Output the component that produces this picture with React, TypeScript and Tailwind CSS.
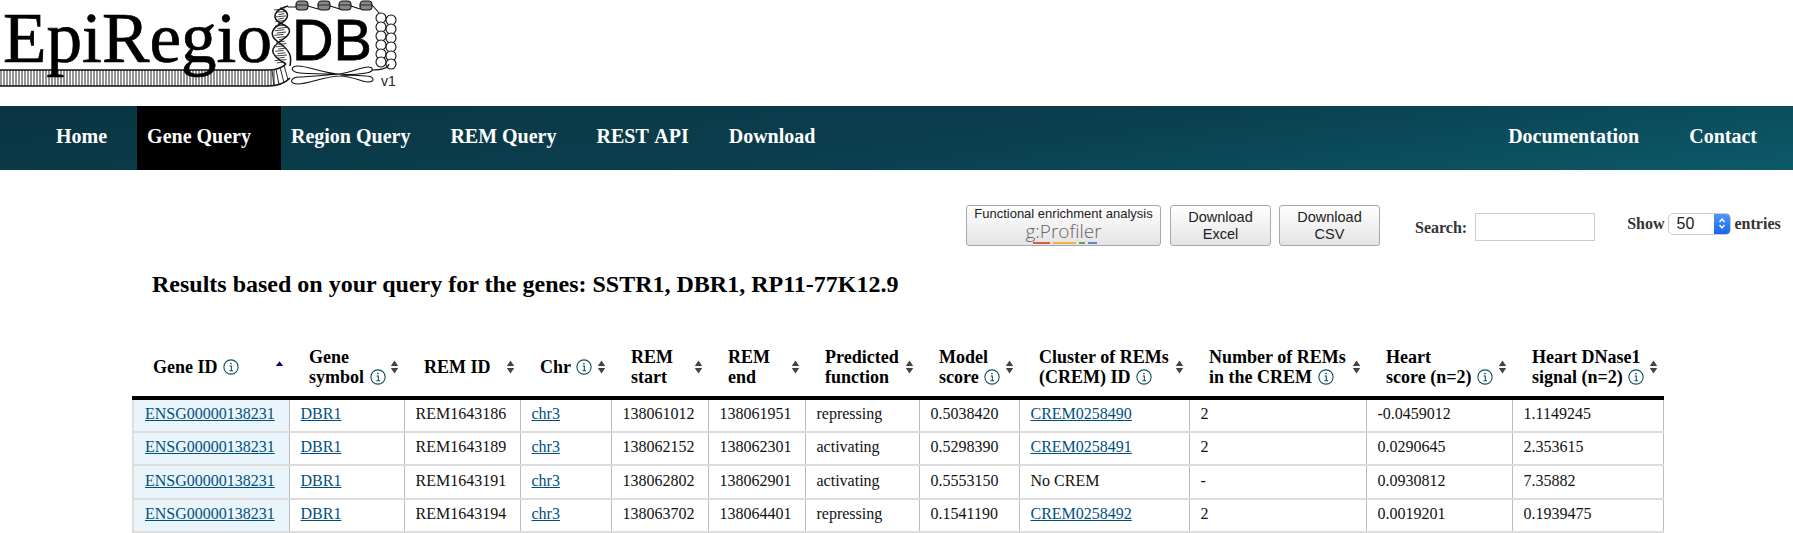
// EpiRegioDB gene query results page.

const serif = "font-['Liberation_Serif',serif]";
const sans = "font-['Liberation_Sans',Arial,sans-serif]";

function Logo() {
  const ticks = Array.from({ length: 92 }, (_, i) => i * 3 + 1);
  const rungs = Array.from({ length: 24 }, (_, i) => 10 + i * 2.3);
  const beads = [18, 27, 36, 45, 54, 62];
  return (
    <svg width="400" height="106" viewBox="0 0 400 106" role="img" className="block">
      <g stroke="#111" fill="none">
        {/* ribbon */}
        <path d="M0 70 H268 Q280 70 286 64 M0 86 H268 Q282 86 290 78" strokeWidth="1.7" />
        {ticks.map((x) => (
          <line key={x} x1={x} x2={x} y1={70} y2={86} strokeWidth="0.9" />
        ))}
        <path d="M272 70 L274 86 M276 69 L279 85 M280 67 L284 83 M284 65 L288 80" strokeWidth="0.9" />
        {/* helix */}
        <path d="M286 64 C268 54 270 48 282 40 C292 33 292 28 282 24 C270 18 274 10 288 6" strokeWidth="1.5" />
        <path d="M290 66 C292 56 290 50 278 42 C270 36 270 30 280 24 C290 18 290 12 280 8" strokeWidth="1.5" />
        {rungs.map((y) => (
          <line key={y} x1={274 + (y % 5)} x2={287 - (y % 4)} y1={y} y2={y - 1} strokeWidth="0.8" />
        ))}
        {/* linker and nucleosomes */}
        <path d="M288 7 L296 7 M308 6 L318 9 M330 6 L340 9 M351 6 L360 9 M372 5 L381 15" strokeWidth="1.1" />
        {[302, 324, 345, 366].map((x) => (
          <g key={x}>
            <rect x={x - 6} y={1} width={12} height={9} rx={3.5} fill="#888" strokeWidth="1.1" />
            <line x1={x - 6} x2={x + 6} y1={5} y2={5} strokeWidth="0.8" />
          </g>
        ))}
        {/* chromatin beads */}
        {beads.map((y) => (
          <g key={y}>
            <circle cx={381} cy={y} r={5} fill="#fff" strokeWidth="1.1" />
            <circle cx={391} cy={y + 2} r={5} fill="#fff" strokeWidth="1.1" />
          </g>
        ))}
        {/* chromosome */}
        <path
          d="M340 74 C352 72 362 67 368 67 C374 67 374 72 366 73 C354 75 346 75 340 74 C326 74 308 66 298 66 C290 66 290 72 300 73 C312 74 326 74 340 74 C326 75 308 77 298 77 C290 78 289 84 298 84 C308 84 326 76 340 76 C352 76 362 82 368 82 C376 82 374 76 366 76 C354 75 346 75 340 76"
          strokeWidth="1.1"
        />
        <path d="M372 70 C382 70 388 68 389 64" strokeWidth="1.1" />
      </g>
      <text x="3" y="62" fontSize="71" fill="#000" stroke="#000" strokeWidth="0.7" fontFamily="'Liberation Serif', serif" textLength="269" lengthAdjust="spacingAndGlyphs">
        EpiRegio
      </text>
      <text x="292" y="60" fontSize="58" fill="#000" stroke="#000" strokeWidth="0.8" fontFamily="'Liberation Sans', Arial, sans-serif" textLength="80" lengthAdjust="spacingAndGlyphs">
        DB
      </text>
      <text x="381" y="86" fontSize="14" fill="#222" fontFamily="'Liberation Sans', Arial, sans-serif">
        v1
      </text>
    </svg>
  );
}

function NavItem({ label, active, className = "" }: { label: string; active?: boolean; className?: string }) {
  return (
    <a className={`flex items-center pb-[5px] pl-[10px] pr-[30px] ${active ? "bg-black" : ""} ${className}`}>{label}</a>
  );
}

function NavBar() {
  return (
    <nav
      className={`flex h-[64px] justify-between bg-[linear-gradient(172deg,#0a3543_0%,#0a3f4e_55%,#0c5a69_100%)] pl-[46px] pr-[36px] text-[20px] font-bold text-white ${serif}`}
    >
      <div className="flex">
        <NavItem label="Home" />
        <NavItem label="Gene Query" active />
        <NavItem label="Region Query" />
        <NavItem label="REM Query" />
        <NavItem label="REST API" className="[word-spacing:2px]" />
        <NavItem label="Download" />
      </div>
      <div className="flex gap-[50px]">
        <a className="flex items-center pb-[5px]">Documentation</a>
        <a className="flex items-center pb-[5px]">Contact</a>
      </div>
    </nav>
  );
}

function Btn({ children, className }: { children: React.ReactNode; className: string }) {
  return (
    <button
      className={`flex flex-col items-center justify-center rounded-[3px] border border-[#a8a8a8] bg-[linear-gradient(#fff,#e4e4e4)] text-center font-normal text-[#222] ${sans} ${className}`}
    >
      {children}
    </button>
  );
}

function Toolbar() {
  return (
    <div className={`flex h-[41px] items-center pl-[966px] text-[16px] font-bold text-[#333] ${serif}`}>
      <Btn className="h-[41px] w-[195px] pb-[3px] text-[13px] leading-[15px]">
        <span>Functional enrichment analysis</span>
        <span className="relative font-['Open_Sans',sans-serif] text-[19px] font-light leading-[21px] text-[#666]">
          g:Profiler
          <span className="absolute bottom-[-2px] left-[8px] flex w-[64px] gap-[3px]">
            <i className="h-[2px] w-[26%] bg-[#dc5a40]" />
            <i className="h-[2px] w-[37%] bg-[#f0b33e]" />
            <i className="h-[2px] w-[10%] bg-[#55a95a]" />
            <i className="h-[2px] w-[15%] bg-[#5a87d8]" />
          </span>
        </span>
      </Btn>
      <Btn className="ml-[9px] h-[41px] w-[101px] text-[14.5px] leading-[17px]">
        <span>Download</span>
        <span>Excel</span>
      </Btn>
      <Btn className="ml-[8px] h-[41px] w-[101px] text-[14.5px] leading-[17px]">
        <span>Download</span>
        <span>CSV</span>
      </Btn>
      <span className="ml-[35px] mt-[5px]">Search:</span>
      <input className="ml-[8px] mt-[3px] h-[28px] w-[120px] border border-[#ccc] bg-white" aria-label="Search" />
      <span className="ml-[32px] mt-[-4px]">Show</span>
      <div className={`ml-[3px] mt-[-4px] flex h-[22px] w-[63px] items-stretch rounded-[5px] border border-[#ccc] bg-white font-normal text-[#222] ${sans}`}>
        <span className="flex-1 pl-[8px] text-[16px] leading-[20px]">50</span>
        <span className="flex w-[16px] items-center justify-center rounded-r-[4px] bg-[linear-gradient(#4e97f8,#1667ee)]">
          <svg width="10" height="17" viewBox="0 0 10 17" fill="none" stroke="#fff" strokeWidth="1.4">
            <path d="M2.5 7 L5 4 L7.5 7 M2.5 10 L5 13 L7.5 10" />
          </svg>
        </span>
      </div>
      <span className="ml-[4px] mt-[-4px]">entries</span>
    </div>
  );
}

function InfoIcon() {
  return (
    <svg width="16" height="16" viewBox="0 0 15 15" fill="none" stroke="#0d4b5c" className="ml-[1px] inline-block align-[-2px]">
      <circle cx="7.5" cy="7.5" r="6.7" strokeWidth="1" />
      <path d="M6.2 6.5 H7.8 V11 M6 11 H9.4" strokeWidth="1" />
      <circle cx="7.4" cy="4.2" r="0.8" fill="#0d4b5c" stroke="none" />
    </svg>
  );
}

function SortIcon({ asc }: { asc?: boolean }) {
  return (
    <svg width="11" height="16" viewBox="0 0 9 15" className="absolute right-[4px] top-1/2 mt-[-11px]">
      {asc ? (
        <path d="M1 6.5 L4.5 2 L8 6.5 Z" fill="#0a0a7a" />
      ) : (
        <path d="M1 6.5 L4.5 1.5 L8 6.5 Z M1 8.5 L4.5 13.5 L8 8.5 Z" fill="#444" />
      )}
    </svg>
  );
}

const columns: { w: number; lines: string[]; info?: boolean; asc?: boolean }[] = [
  { w: 156, lines: ["Gene ID"], info: true, asc: true },
  { w: 115, lines: ["Gene", "symbol"], info: true },
  { w: 116, lines: ["REM ID"] },
  { w: 91, lines: ["Chr"], info: true },
  { w: 97, lines: ["REM", "start"] },
  { w: 97, lines: ["REM", "end"] },
  { w: 114, lines: ["Predicted", "function"] },
  { w: 100, lines: ["Model", "score"], info: true },
  { w: 170, lines: ["Cluster of REMs", "(CREM) ID"], info: true },
  { w: 177, lines: ["Number of REMs", "in the CREM"], info: true },
  { w: 146, lines: ["Heart", "score (n=2)"], info: true },
  { w: 151, lines: ["Heart DNase1", "signal (n=2)"], info: true },
];

const rows = [
  ["REM1643186", "138061012", "138061951", "repressing", "0.5038420", "CREM0258490", "2", "-0.0459012", "1.1149245"],
  ["REM1643189", "138062152", "138062301", "activating", "0.5298390", "CREM0258491", "2", "0.0290645", "2.353615"],
  ["REM1643191", "138062802", "138062901", "activating", "0.5553150", "No CREM", "-", "0.0930812", "7.35882"],
  ["REM1643194", "138063702", "138064401", "repressing", "0.1541190", "CREM0258492", "2", "0.0019201", "0.1939475"],
];

function Cell({ children, link, first }: { children?: React.ReactNode; link?: boolean; first?: boolean }) {
  return (
    <td
      className={`h-[33.5px] border-b-2 border-r border-b-[#ddd] border-r-[#bbb] pb-[2px] pl-[11px] align-middle ${
        first ? "border-l-2 border-l-[#ddd] bg-[#e9f5fb]" : ""
      } ${link ? "text-[#00507f] underline" : "text-[#111]"}`}
    >
      {children}
    </td>
  );
}

function ResultsTable() {
  return (
    <table className={`ml-[132px] table-fixed border-collapse text-[16px] leading-[18px] ${serif}`} style={{ width: 1530 }}>
      <colgroup>
        {columns.map((c) => (
          <col key={c.lines[0] + c.w} style={{ width: c.w }} />
        ))}
      </colgroup>
      <thead>
        <tr>
          {columns.map((c) => (
            <th key={c.lines[0] + c.w} className="relative h-[55px] border-b-4 border-b-black pb-[6px] pl-[20px] text-left align-middle text-[18px] font-bold leading-[20px] text-black">
              {c.lines.map((l, i) => (
                <div key={l} className="whitespace-nowrap">
                  {l}
                  {c.info && i === c.lines.length - 1 ? (
                    <>
                      {" "}
                      <InfoIcon />
                    </>
                  ) : null}
                </div>
              ))}
              <SortIcon asc={c.asc} />
            </th>
          ))}
        </tr>
      </thead>
      <tbody>
        {rows.map((r) => (
          <tr key={r[0]}>
            <Cell link first>ENSG00000138231</Cell>
            <Cell link>DBR1</Cell>
            <Cell>{r[0]}</Cell>
            <Cell link>chr3</Cell>
            <Cell>{r[1]}</Cell>
            <Cell>{r[2]}</Cell>
            <Cell>{r[3]}</Cell>
            <Cell>{r[4]}</Cell>
            <Cell link={r[5] !== "No CREM"}>{r[5]}</Cell>
            <Cell>{r[6]}</Cell>
            <Cell>{r[7]}</Cell>
            <Cell>{r[8]}</Cell>
          </tr>
        ))}
        {/* next row is cut off by the window, only its top edge shows */}
        <tr>
          {columns.map((c, i) => (
            <Cell key={c.lines[0] + c.w} first={i === 0} />
          ))}
        </tr>
      </tbody>
    </table>
  );
}

export default function App() {
  return (
    <div className="h-[533px] w-[1793px] overflow-hidden bg-white">
      <Logo />
      <NavBar />
      <div className="pt-[35px]">
        <Toolbar />
        <h2 className={`pl-[152px] pt-[23px] text-[24px] font-bold leading-[30px] text-black ${serif}`}>
          Results based on your query for the genes: SSTR1, DBR1, RP11-77K12.9
        </h2>
        <div className="pt-[44px]">
          <ResultsTable />
        </div>
      </div>
    </div>
  );
}
